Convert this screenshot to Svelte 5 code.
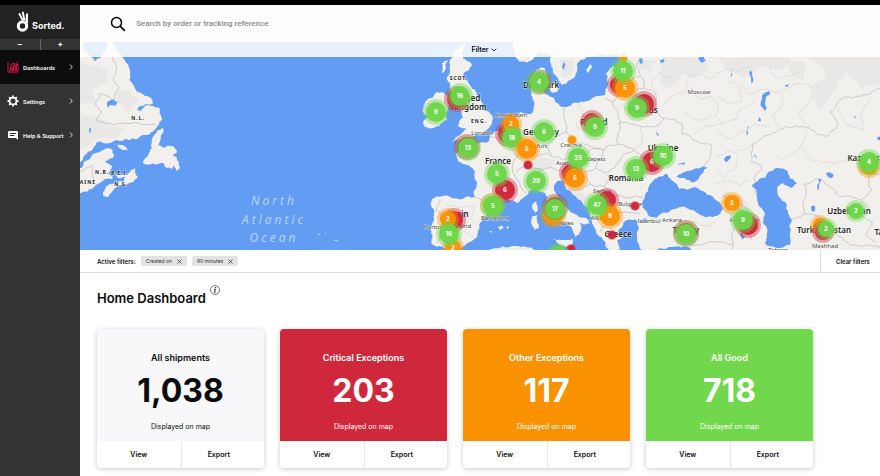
<script lang="ts">
  type Point = [number, number];

  const navItems = [
    { key: 'dashboards', label: 'Dashboards', active: true },
    { key: 'settings', label: 'Settings', active: false },
    { key: 'help', label: 'Help & Support', active: false },
  ];

  const cards = [
    { key: 'all', title: 'All shipments', count: '1,038' },
    { key: 'critical', title: 'Critical Exceptions', count: '203' },
    { key: 'other', title: 'Other Exceptions', count: '117' },
    { key: 'good', title: 'All Good', count: '718' },
  ];

  let search = $state('');
  let filters = $state(['Created on', '60 minutes']);

  function removeFilter(name: string) {
    filters = filters.filter((f) => f !== name);
  }

  // Coastlines, borders and lakes are kept as coarse outlines and roughened when drawn
  const land = [
    '80,36 84,50 91,57 95,61 101,57 106,50 110,36 113,42 122,57 130,72 129,80 138,92 152,100 153,103 145,105 160,109 162,118 157,127 147,135 137,139 120,141 97,142 87,153 79,163 79,36',
    '74,172 84,162 92,155 112,149 114,156 105,161 112,166 108,173 113,178 100,183 93,188 87,192 74,198',
    '103,192 108,185 123,182 131,170 135,168 138,177 128,184 117,187 108,197 103,195',
    '112,172 118,175 126,174 125,177 117,177',
    '113,143 122,145 128,150 122,150',
    '158,130 163,128 163,133 160,140 158,145 165,148 173,146 177,152 173,155 177,158 179,162 180,168 177,171 173,165 172,169 165,167 163,163 143,163 147,157 150,152 152,143',
    '455,50 465,40 463,58 472,65 469,70 463,75 468,82 475,90 481,101 484,110 492,115 492,122 488,129 482,134 470,137 462,140 450,142 462,133 467,129 458,127 459,122 463,117 460,108 462,103 457,100 452,93 450,83 447,77 450,70 450,60',
    '425,102 432,98 435,93 443,92 448,98 448,108 447,120 440,125 425,127 423,123 428,117 423,112',
    '442,63 448,60 446,68 442,73',
    '512,36 515,56 520,62 528,62 536,55 549,54 550,62 553,72 558,80 562,85 568,81 574,78 577,70 580,60 587,57 604,55 624,54 624,36',
    '590,64 592,67 588,73 586,70',
    '533,203 536,201 538,210 535,213',
    '532,216 537,215 539,228 534,230 532,225',
    '498,227 502,225 504,228 500,230',
    '507,226 509,227 507,229',
    '489,231 492,231 491,233',
    '553,239 563,240 573,239 571,247 562,246',
    '484,256 490,249 503,246 518,246 532,248 540,256',
    '550,84 556,83 558,90 553,93 550,90',
    '886,36 622,36 619,57 618,66 610,68 606,73 607,87 605,95 590,100 573,103 565,107 555,102 548,95 544,93 541,86 547,78 545,68 535,72 530,80 531,90 533,100 533,112 520,112 513,122 500,130 490,135 488,142 473,146 465,143 466,150 456,153 458,161 468,165 475,172 477,183 475,197 463,199 450,197 437,196 431,203 434,210 434,220 431,233 431,243 440,246 447,250 455,256 462,247 472,241 478,233 480,223 483,217 492,213 499,206 500,200 508,200 517,203 524,197 529,191 536,188 545,193 547,201 552,212 560,219 568,225 573,232 575,239 580,232 581,225 578,221 586,224 590,224 586,218 573,213 563,205 557,195 554,187 557,181 563,181 566,189 577,198 587,207 590,213 592,222 596,232 602,238 606,247 611,256 620,249 617,241 622,238 618,231 624,222 636,220 639,227 637,236 639,246 643,256 886,256',
  ];

  const water = [
    '652,182 658,177 667,174 673,181 679,189 688,190 697,188 710,195 721,204 722,210 717,216 700,215 690,210 680,207 667,213 656,218 648,215 643,208 643,200 648,191',
    '682,173 693,170 708,167 703,173 698,180 691,182 683,178 676,177',
    '752,185 765,178 768,172 777,168 788,172 790,178 797,183 792,188 783,183 777,188 778,195 787,205 788,213 792,220 790,245 780,248 765,243 767,233 763,223 765,213 758,203 757,193',
    '637,222 643,219 648,220 643,223',
    '658,249 672,247 690,248 692,256 656,256',
    '107,103 111,100 116,102 119,101 116,106 110,105 108,108',
    '137,109 142,106 146,104 143,108 139,111',
    '89,128 91,128 91,132 89,133',
    '698,58 704,57 706,61 702,63',
    '660,60 664,59 664,62 661,63',
    '639,60 642,58 643,63 640,64',
    '764,93 769,91 770,94 766,97 765,103 767,108 765,111 761,106 762,98',
    '731,70 732,76 730,77',
    '759,117 761,121 758,121',
    '785,85 789,84 787,87',
    '750,70 753,82 751,83',
    '747,128 749,126 748,134 746,136',
    '724,159 730,155 731,158 726,162',
    '754,154 758,158 755,157',
    '818,178 821,179 819,190 817,188',
    '826,173 834,174 832,178 828,177',
    '811,207 815,206 814,212 811,210',
    '678,164 685,163 684,165 679,165',
    '740,228 745,236 743,243',
    '854,117 856,116 855,119',
    '877,137 882,136 881,141 878,140',
    '657,131 659,135 657,136',
    '562,66 564,62 565,66 563,70',
  ];

  const relief = [
    '80,60 95,66 108,70 104,84 92,88 96,100 80,104',
    '80,112 98,118 110,126 125,130 118,138 96,138 80,150',
    '116,90 130,92 140,100 128,112 120,104',
    '660,57 700,57 710,70 696,78 680,76 672,88 660,84',
    '716,57 790,57 782,70 760,66 744,78 728,70',
    '808,57 880,57 880,84 862,90 846,72 834,92 818,108 812,92 826,74',
    '786,60 806,64 802,82 792,76',
    '636,57 656,60 652,74 640,70',
    '520,160 540,156 556,160 548,170 530,172',
    '566,188 580,190 596,206 592,212 578,198',
    '722,190 740,196 752,208 744,212 728,204',
    '560,60 574,60 572,74 562,78',
  ];

  const borders = [
    '112,57 117,68 113,78 119,88 115,100 100,93 95,104 102,112 96,120 106,124 116,124 156,124',
    '80,172 92,165 94,180',
    '440,200 436,210 441,214 441,236 436,244',
    '475,197 486,202 499,203',
    '490,135 502,144 513,150 517,156 512,168 516,178 522,190 527,194',
    '513,122 518,132 516,142 517,156 530,158 540,154 551,156 548,145 556,138 566,132 564,118 565,107',
    '516,172 526,164 536,168 548,168 562,170 563,181',
    '566,132 576,142 590,146 604,150 618,144 620,130 618,112 612,102 605,98',
    '551,156 562,160 578,156 590,150 604,150',
    '562,170 572,176 584,172 596,168 604,150',
    '584,172 590,184 582,190 570,188',
    '596,168 608,172 620,160 634,150 618,144',
    '590,184 604,186 612,196 628,198 643,198',
    '604,186 608,174',
    '604,204 612,212 624,212 640,214',
    '592,218 602,214 606,224 600,232',
    '634,150 644,160 652,172 658,172',
    '612,102 618,92 630,96 644,88 640,76 636,66 640,57',
    '607,84 618,82 632,80 640,76',
    '618,124 640,126 658,126 664,118 654,108 656,94 644,88',
    '664,118 682,124 682,134 694,140 712,146 710,158 702,168',
    '722,196 734,202 748,210',
    '722,210 730,214 734,222 744,228 752,240',
    '734,222 732,238 730,256',
    '690,246 704,244 718,242 732,244',
    '756,194 754,178 762,168 752,162 752,144 764,136 778,130 796,126 812,130 828,136 838,124 830,112 840,100 858,96 870,94 886,88',
    '804,214 804,184 822,180 836,194 850,196 862,200 870,212',
    '790,222 806,214 820,218 834,230 846,242 860,246 886,246',
    '862,200 872,190 868,178 886,172',
    '862,216 872,222 866,234 876,242',
  ];

  const regions = [
    '665,104 672,96 684,92 688,78 700,74 712,78 724,70 738,72 752,66',
    '690,88 698,98 710,96 718,104 714,116 722,124 736,120 742,108 756,100',
    '684,112 698,120 712,116',
    '694,134 706,126 722,124',
    '716,130 728,138 744,132 756,124 770,126',
    '742,84 748,94 762,90 780,92 782,104 772,116 780,128',
    '782,92 796,84 812,86 808,104 798,112 806,124',
    '728,82 740,88 742,100 728,104 718,98',
    '770,66 776,78 790,76 800,68',
    '838,106 846,124 864,130 862,112 870,98',
    '716,158 728,150 738,156 736,168 724,178 716,170',
    '738,150 752,146',
    '672,78 660,72 652,80 656,94',
    '806,130 800,146 812,160 836,164 852,156',
    '640,126 642,140 634,150',
    '580,104 584,116 576,126 586,134',
    '620,104 632,112 644,108',
    '446,204 460,208 474,206 470,218 478,226',
    '456,228 466,232 474,238',
    '480,160 490,156 500,160 508,156',
    '484,182 494,188 508,184',
    '690,222 704,226 716,222',
    '800,148 786,158 776,156',
    '714,184 728,180 740,186 748,180',
  ];

  const tones = { g: '#6bd64a', o: '#ff9100', r: '#cf2439' };

  // x, y, radius, tone, count
  const pins: [number, number, number, keyof typeof tones, string][] = [
    [623, 58, 4, 'o', ''],
    [457, 99, 10, 'r', ''],
    [460, 96, 10, 'g', '16'],
    [436, 112, 10, 'g', '9'],
    [467, 147, 10, 'r', ''],
    [468, 148, 10, 'g', '13'],
    [508, 134, 10, 'r', ''],
    [511, 124, 8, 'o', '2'],
    [512, 138, 10, 'g', '18'],
    [540, 82, 9, 'r', ''],
    [539, 82, 10, 'g', '4'],
    [544, 132, 10, 'g', '6'],
    [527, 149, 10, 'o', '5'],
    [619, 85, 9, 'r', ''],
    [625, 88, 10, 'o', '5'],
    [623, 71, 10, 'g', '11'],
    [644, 104, 10, 'r', ''],
    [637, 108, 10, 'g', '9'],
    [592, 122, 9, 'r', ''],
    [595, 127, 10, 'g', '9'],
    [572, 140, 4, 'o', ''],
    [528, 165, 4, 'r', ''],
    [505, 190, 10, 'r', '6'],
    [497, 174, 10, 'g', '5'],
    [492, 205, 9, 'o', ''],
    [493, 206, 10, 'g', '5'],
    [536, 181, 10, 'g', '29'],
    [571, 173, 9, 'r', ''],
    [575, 178, 10, 'o', '6'],
    [578, 158, 10, 'g', '23'],
    [652, 162, 10, 'r', '6'],
    [636, 169, 10, 'g', '12'],
    [663, 156, 10, 'g', '10'],
    [607, 200, 9, 'r', ''],
    [610, 216, 10, 'o', '9'],
    [597, 205, 10, 'g', '47'],
    [635, 206, 4, 'r', ''],
    [612, 235, 4, 'r', ''],
    [553, 215, 10, 'o', ''],
    [555, 207, 10, 'r', ''],
    [555, 209, 10, 'g', '17'],
    [454, 220, 9, 'r', ''],
    [448, 219, 8, 'o', '2'],
    [453, 248, 8, 'o', '2'],
    [449, 234, 10, 'g', '16'],
    [571, 249, 4, 'r', ''],
    [558, 255, 9, 'g', ''],
    [686, 233, 10, 'r', ''],
    [686, 234, 10, 'g', '10'],
    [732, 203, 8, 'o', '2'],
    [748, 225, 10, 'r', ''],
    [743, 220, 10, 'g', '9'],
    [869, 166, 9, 'o', ''],
    [869, 162, 10, 'g', '4'],
    [856, 211, 8, 'g', '2'],
    [820, 225, 7, 'o', ''],
    [823, 232, 8, 'r', ''],
    [826, 229, 8, 'g', '2'],
  ];

  // last value picks the label style: country, city or province
  const labels: [number, number, string, string][] = [
    [138, 120, 'N.L.', 'province'],
    [102, 174, 'N.B.', 'province'],
    [120, 175, 'P.E.I.', 'province'],
    [88, 184, 'AINE', 'province'],
    [121, 186, 'N.S.', 'province'],
    [459, 80, 'SCOT.', 'province'],
    [479, 123, 'ENG.', 'province'],
    [467, 101, 'United', 'country'],
    [469, 110, 'Kingdom', 'country'],
    [498, 164, 'France', 'country'],
    [458, 217, 'Spain', 'country'],
    [541, 88, 'Denmark', 'country'],
    [541, 135, 'Germany', 'country'],
    [594, 125, 'Poland', 'country'],
    [643, 113, 'Belarus', 'country'],
    [663, 151, 'Ukraine', 'country'],
    [626, 181, 'Romania', 'country'],
    [618, 237, 'Greece', 'country'],
    [686, 233, 'Turkey', 'country'],
    [870, 161, 'Kazakhstan', 'country'],
    [849, 214, 'Uzbekistan', 'country'],
    [824, 233, 'Turkmenistan', 'country'],
    [893, 235, 'Tajikistan', 'country'],
    [511, 117, 'Amsterdam', 'city'],
    [482, 135, 'London', 'city'],
    [534, 148, 'Frankfurt', 'city'],
    [571, 147, 'Czechia', 'city'],
    [566, 165, 'Austria', 'city'],
    [592, 161, 'Budapest', 'city'],
    [602, 193, 'Serbia', 'city'],
    [630, 206, 'Bulgaria', 'city'],
    [601, 220, 'Albania', 'city'],
    [564, 225, 'Naples', 'city'],
    [495, 220, 'Barcelona', 'city'],
    [436, 229, 'Portugal', 'city'],
    [461, 228, 'Madrid', 'city'],
    [649, 223, 'Istanbul', 'city'],
    [672, 222, 'Ankara', 'city'],
    [744, 222, 'Azerbaijan', 'city'],
    [699, 94, 'Moscow', 'city'],
    [825, 248, 'Mashhad', 'city'],
    [778, 252, 'Tehran', 'city'],
  ];

  function parse(line: string): Point[] {
    return line.split(' ').map((p) => p.split(',').map(Number) as Point);
  }

  function noise(x: number, y: number) {
    const n = Math.sin(x * 12.9898 + y * 78.233) * 43758.5453;
    return n - Math.floor(n) - 0.5;
  }

  function split(a: Point, b: Point, depth: number, out: Point[]) {
    const dx = b[0] - a[0];
    const dy = b[1] - a[1];
    const length = Math.hypot(dx, dy);
    if (depth === 0 || length < 2) {
      out.push(b);
      return;
    }
    // long straight edges get less bend so they keep their course
    const k = noise(a[0] + b[0], a[1] + b[1]) * Math.min(0.35, 4 / length);
    const mid: Point = [(a[0] + b[0]) / 2 - dy * k, (a[1] + b[1]) / 2 + dx * k];
    split(a, mid, depth - 1, out);
    split(mid, b, depth - 1, out);
  }

  function rough(line: string, closed: boolean) {
    const pts = parse(line);
    const out: Point[] = [pts[0]];
    const last = closed ? pts.length : pts.length - 1;
    for (let i = 0; i < last; i++) {
      split(pts[i], pts[(i + 1) % pts.length], 3, out);
    }
    return 'M' + out.map((p) => p[0].toFixed(1) + ' ' + p[1].toFixed(1)).join('L') + (closed ? 'Z' : '');
  }
</script>

<div class="app">
  <aside class="sidebar">
    <a class="brand" href="#home">
      <svg viewBox="0 0 14 21" width="14" height="21" aria-hidden="true">
        <circle cx="6.500" cy="15" r="4.200" fill="none" stroke="#fff" stroke-width="3" />
        <path d="M6 9.800 2.600 3.400Q2.400 1.600 4 2L7.600 9zM7.400 9 5.900 1.600Q6.400 0 7.800 1L9.400 9.600zM9.400 10 10.100 2.800Q11.400 1.600 12 3L12 13z" fill="#fff" />
      </svg>
      <span>Sorted.</span>
    </a>
    <div class="zoom-row">
      <button aria-label="Zoom out">−</button>
      <button aria-label="Zoom in">+</button>
    </div>
    <nav>
      {#each navItems as item}
        <a class="nav-item" class:active={item.active} href="#{item.key}">
          <svg class="nav-icon" viewBox="0 0 12 12" width="12" height="12" aria-hidden="true">
            {#if item.key === 'dashboards'}
              <path d="M1 1v10h10.500M3.500 10V6h1.700v4M6.400 10V4.500h1.700V10M9.300 10V3.500h1.700V10M3 4.400l3-2 2 1L11 1" fill="none" stroke="#e3174f" />
            {:else if item.key === 'settings'}
              <circle cx="6" cy="6" r="3.400" fill="none" stroke="#fff" stroke-width="1.700" />
              <path d="M6 .6v2M6 9.400v2M.6 6h2M9.400 6h2M2.200 2.200l1.300 1.300M8.500 8.500l1.300 1.300M2.200 9.800l1.300-1.300M8.500 3.500l1.300-1.300" stroke="#fff" stroke-width="1.800" />
            {:else}
              <path d="M2 2h8q1 0 1 1v8L9 9H2Q1 9 1 8V3q0-1 1-1z" fill="#fff" />
              <path d="M2.800 4.500h6.400M2.800 6.500h4.600" stroke="#333" />
            {/if}
          </svg>
          <span>{item.label}</span>
          <svg class="chevron" viewBox="0 0 4 6" width="4" height="6" aria-hidden="true">
            <path d="M1 .5 3.300 3 1 5.500" fill="none" stroke="#fff" stroke-width=".8" />
          </svg>
        </a>
      {/each}
    </nav>
  </aside>

  <main>
    <header class="search">
      <label for="search" aria-label="Search">
        <svg viewBox="0 0 16 16" width="16" height="16" aria-hidden="true">
          <circle cx="6.500" cy="6.500" r="5" fill="none" stroke="#000" stroke-width="1.500" />
          <path d="m10.200 10.200 4.600 4.600" stroke="#000" stroke-width="1.700" />
        </svg>
      </label>
      <input id="search" type="text" placeholder="Search by order or tracking reference" bind:value={search} />
    </header>

    <section class="map">
      <svg viewBox="80 42 800 208" preserveAspectRatio="xMidYMid slice" role="img" aria-label="Shipment map">
        <defs>
          <clipPath id="land-clip">
            {#each land as shape}
              <path d={rough(shape, true)} />
            {/each}
          </clipPath>
        </defs>
        {#each land as shape}
          <path class="land" d={rough(shape, true)} />
        {/each}
        <g clip-path="url(#land-clip)">
          {#each relief as shape}
            <path class="relief" d={rough(shape, true)} />
          {/each}
          {#each regions as line}
            <path class="region" d={rough(line, false)} />
          {/each}
          {#each borders as line}
            <path class="border" d={rough(line, false)} />
          {/each}
        </g>
        {#each water as shape}
          <path class="water" d={rough(shape, true)} />
        {/each}
        <path class="azores" d="m318 234 2 1M325 233h1M334 240l4 1" />

        <g class="ocean">
          <text x="274" y="205">North</text>
          <text x="274" y="224">Atlantic</text>
          <text x="274" y="242">Ocean</text>
        </g>
        {#each labels as [x, y, name, kind]}
          <text class={kind} {x} {y}>{name}</text>
        {/each}

        {#each pins as [x, y, r, tone, count]}
          <g>
            <circle cx={x} cy={y} r={r > 5 ? r + 3 : r + 1} fill={tones[tone]} opacity="0.4" />
            <circle cx={x} cy={y} {r} fill={tones[tone]} opacity="0.95" />
            {#if count}
              <text class="count" {x} y={y + 2}>{count}</text>
            {/if}
          </g>
        {/each}
      </svg>
      <button class="filter-toggle">
        Filter
        <svg viewBox="0 0 6 4" width="6" height="4" aria-hidden="true">
          <path d="M.7.700 3 3 5.300.700" fill="none" stroke="#222" stroke-width=".9" />
        </svg>
      </button>
    </section>

    <div class="active-filters">
      <span class="filters-label">Active filters:</span>
      {#each filters as filter}
        <span class="chip">
          {filter}
          <button aria-label="Remove {filter}" onclick={() => removeFilter(filter)}>
            <svg viewBox="0 0 5 5" width="5" height="5" aria-hidden="true">
              <path d="m.5.500 4 4m0-4-4 4" stroke="#333" stroke-width=".8" />
            </svg>
          </button>
        </span>
      {/each}
      <button class="clear" onclick={() => (filters = [])}>Clear filters</button>
    </div>

    <div class="title-row">
      <h1>Home Dashboard</h1>
      <svg viewBox="0 0 10 10" width="10" height="10" role="img" aria-label="Info">
        <circle cx="5" cy="5" r="4.500" fill="none" stroke="#333" stroke-width=".7" />
        <path d="M4.200 4.200h1.100L4.500 7.500h.8" fill="none" stroke="#111" stroke-width="1" />
        <circle cx="5.600" cy="2.600" r=".7" fill="#111" />
      </svg>
    </div>

    <section class="cards">
      {#each cards as card}
        <article class="card {card.key}">
          <div class="card-body">
            <h2>{card.title}</h2>
            <strong>{card.count}</strong>
            <p>Displayed on map</p>
          </div>
          <div class="card-actions">
            <button>View</button>
            <button>Export</button>
          </div>
        </article>
      {/each}
    </section>
  </main>
</div>

<style>
  :global(body) {
    background: #fff;
  }

  .app {
    display: flex;
    box-sizing: border-box;
    min-height: 100vh;
    border-top: 5px solid #000;
    font-family: Inter, 'Liberation Sans', sans-serif;
    color: #0b0c0e;
  }

  button {
    border: 0;
    padding: 0;
    background: none;
    font: inherit;
    color: inherit;
    cursor: pointer;
  }

  a {
    color: #fff;
    text-decoration: none;
  }

  svg {
    display: block;
    flex: none;
  }

  .sidebar {
    flex: none;
    width: 80px;
    background: #333;
    color: #fff;
  }

  .brand {
    display: flex;
    align-items: flex-end;
    gap: 2px;
    height: 27px;
    padding: 0 0 7px 16px;
    background: #222;
    font-size: 9px;
    line-height: 12px;
    font-weight: 700;
  }

  .zoom-row {
    display: flex;
    height: 11px;
  }

  .zoom-row button {
    flex: 1;
    font-size: 8px;
    line-height: 11px;
    font-weight: 700;
  }

  .zoom-row button + button {
    border-left: 1px solid #666;
  }

  .nav-item {
    display: flex;
    align-items: center;
    height: 34px;
    padding: 0 7px;
    font-family: Roboto, 'Liberation Sans', sans-serif;
    font-size: 6px;
    font-weight: 500;
    white-space: nowrap;
  }

  .nav-item.active {
    background: #0d0d0d;
  }

  .nav-icon {
    margin-right: 4px;
  }

  .chevron {
    margin-left: auto;
  }

  main {
    flex: 1;
    min-width: 0;
  }

  .search {
    display: flex;
    align-items: center;
    gap: 10px;
    height: 37px;
    padding: 0 30px;
    background: #fdfdfd;
  }

  .search input {
    flex: 1;
    min-width: 0;
    padding: 0;
    border: 0;
    outline: 0;
    background: none;
    font: 500 8px/12px Roboto, 'Liberation Sans', sans-serif;
  }

  .search input::placeholder {
    color: #888;
    opacity: 1;
  }

  .map {
    position: relative;
    height: 208px;
    background: #639df3;
  }

  .map > svg {
    width: 100%;
    height: 100%;
  }

  .land {
    fill: #f2f0ed;
  }

  .relief {
    fill: #e6e6e4;
    opacity: 0.8;
  }

  .water {
    fill: #639df3;
  }

  .border,
  .region {
    fill: none;
    stroke: #b9b9bd;
    stroke-width: 0.7;
  }

  .region {
    stroke: #d3d2d4;
    stroke-width: 0.6;
  }

  .azores {
    stroke: #dfe9f5;
    stroke-width: 0.8;
  }

  .map text {
    text-anchor: middle;
    font-family: 'Noto Sans', sans-serif;
    paint-order: stroke;
    stroke: #fff;
    stroke-width: 1px;
    stroke-opacity: 0.7;
  }

  .map .ocean text {
    font-size: 12px;
    font-style: italic;
    letter-spacing: 3px;
    fill: #b5d3fa;
    stroke: none;
  }

  .map .country {
    font-size: 8px;
    font-weight: 600;
    fill: #222;
  }

  .map .city {
    font-size: 6px;
    fill: #444;
  }

  .map .province {
    font-size: 5px;
    font-weight: 700;
    letter-spacing: 1px;
    fill: #222;
  }

  .map .count {
    font-family: Inter, sans-serif;
    font-size: 6px;
    font-weight: 700;
    fill: #fff;
    stroke: none;
  }

  .map .filter-toggle {
    position: absolute;
    inset: 0 0 auto;
    display: flex;
    align-items: center;
    justify-content: center;
    gap: 2px;
    width: 100%;
    height: 15px;
    padding-left: 8px;
    background: rgba(255, 255, 255, 0.86);
    font-size: 7px;
    font-weight: 600;
  }

  .active-filters {
    display: flex;
    align-items: center;
    gap: 5px;
    height: 22px;
    padding-left: 17px;
    border-bottom: 1px solid #ddd;
    font-size: 6px;
  }

  .filters-label {
    font-weight: 600;
  }

  .chip {
    display: flex;
    align-items: center;
    gap: 5px;
    height: 10px;
    padding: 0 5px;
    border-radius: 2px;
    background: #e3e3e3;
    color: #333;
    font-size: 5px;
  }

  .clear {
    width: 60px;
    height: 22px;
    margin-left: auto;
    padding-left: 5px;
    border-left: 1px solid #ddd;
    font-weight: 600;
  }

  .title-row {
    display: flex;
    gap: 4px;
    padding: 12px 17px 0;
  }

  h1 {
    margin: 0;
    padding-top: 4px;
    font-size: 13px;
    line-height: 18px;
    font-weight: 600;
  }

  .cards {
    display: grid;
    grid-template-columns: repeat(4, 1fr);
    gap: 16px;
    padding: 22px 67px 8px 17px;
  }

  .card {
    overflow: hidden;
    border-radius: 4px;
    background: #fff;
    box-shadow: 0 1px 5px rgba(0, 0, 0, 0.22);
    text-align: center;
  }

  .card-body {
    display: flex;
    flex-direction: column;
    align-items: center;
    height: 92px;
    padding-top: 20px;
    color: #fff;
  }

  .all .card-body {
    background: #f8f8fa;
    color: #0b0c0e;
  }

  .critical .card-body {
    background: #cf283c;
  }

  .other .card-body {
    background: #f99100;
  }

  .good .card-body {
    background: #71d74c;
  }

  h2 {
    margin: 0;
    font-size: 9px;
    line-height: 18px;
    font-weight: 600;
  }

  strong {
    margin-top: 4px;
    font-size: 32px;
    line-height: 40px;
    font-weight: 700;
  }

  p {
    margin: 11px 0 0;
    font-size: 7px;
    line-height: 10px;
  }

  .card-actions {
    display: grid;
    grid-template-columns: 1fr 1fr;
    height: 27px;
  }

  .card-actions button {
    font-size: 7px;
    font-weight: 600;
  }

  .card-actions button + button {
    padding-right: 8px;
    border-left: 1px solid #e6e6e6;
  }
</style>
